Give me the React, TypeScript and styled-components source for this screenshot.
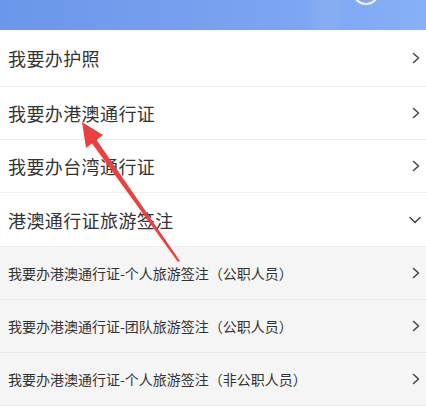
import React from 'react'
import styled, { createGlobalStyle } from 'styled-components'

const GlobalStyle = createGlobalStyle`
  body {
    margin: 0;
    background: #ffffff;
    font-family: "Noto Sans CJK SC", "Noto Sans", sans-serif;
  }
`

const Page = styled.div`
  position: relative;
  width: 426px;
  height: 409px;
  overflow: hidden;
  background: #ffffff;
`

const Header = styled.div`
  position: relative;
  height: 30px;
  background: linear-gradient(90deg, #6b97ea 0%, #7aa3f0 60%, #86b0f7 100%);
`

const HeaderBadge = styled.div`
  position: absolute;
  left: 353px;
  top: -19px;
  width: 22px;
  height: 20px;
  border-radius: 50%;
  border: 2px solid #eef2fa;
  background: #7fa6ee;
`

const HeaderBand = styled.div`
  position: absolute;
  left: 306px;
  top: 0;
  width: 40px;
  height: 30px;
  background: linear-gradient(90deg, rgba(255, 255, 255, 0) 0%, rgba(255, 255, 255, 0.06) 40%, rgba(255, 255, 255, 0.06) 70%, rgba(255, 255, 255, 0) 100%);
`

const List = styled.div`
  display: flex;
  flex-direction: column;
`

const Row = styled.div<{ $sub?: boolean; $h: number }>`
  display: flex;
  align-items: center;
  justify-content: space-between;
  height: ${(p) => p.$h}px;
  padding: 0 4px 0 8px;
  box-sizing: border-box;
  background: ${(p) => (p.$sub ? '#f5f5f5' : '#ffffff')};
  border-bottom: 1px solid ${(p) => (p.$sub ? '#ebebeb' : '#eeeeee')};
`

const Label = styled.span<{ $sub?: boolean }>`
  color: #333333;
  font-size: ${(p) => (p.$sub ? 14 : 18)}px;
  letter-spacing: ${(p) => (p.$sub ? '0' : '0.4px')};
`

const Chevron = styled.svg`
  flex: none;
`

const Arrow = styled.svg`
  position: absolute;
  left: 0;
  top: 0;
  pointer-events: none;
`

const Right = () => (
  <Chevron width="12" height="14" viewBox="0 0 12 14">
    <path d="M3.5 2.5 L8.5 7 L3.5 11.5" fill="none" stroke="#444" strokeWidth="1.5" strokeLinecap="round" strokeLinejoin="round" />
  </Chevron>
)

const Down = () => (
  <Chevron width="14" height="12" viewBox="0 0 14 12">
    <path d="M2 3.5 L7 8.5 L12 3.5" fill="none" stroke="#444" strokeWidth="1.5" strokeLinecap="round" strokeLinejoin="round" />
  </Chevron>
)

const main = [
  { text: '我要办护照', h: 57 },
  { text: '我要办港澳通行证', h: 53 },
  { text: '我要办台湾通行证', h: 53 },
]
const subs = [
  '我要办港澳通行证-个人旅游签注（公职人员）',
  '我要办港澳通行证-团队旅游签注（公职人员）',
  '我要办港澳通行证-个人旅游签注（非公职人员）',
]

export default function App() {
  return (
    <Page>
      <GlobalStyle />
      <Header>
        <HeaderBand />
        <HeaderBadge />
      </Header>
      <List>
        {main.map((m) => (
          <Row key={m.text} $h={m.h}>
            <Label>{m.text}</Label>
            <Right />
          </Row>
        ))}
        <Row $h={54}>
          <Label>港澳通行证旅游签注</Label>
          <Down />
        </Row>
        {subs.map((t) => (
          <Row key={t} $sub $h={53}>
            <Label $sub>{t}</Label>
            <Right />
          </Row>
        ))}
      </List>
      <Arrow width="426" height="409" viewBox="0 0 426 409">
        <polygon points="178,262 180,261 96,139 91,142" fill="#e8413f" />
        <polygon points="82,122 86,148 103,135" fill="#e8413f" />
      </Arrow>
    </Page>
  )
}
